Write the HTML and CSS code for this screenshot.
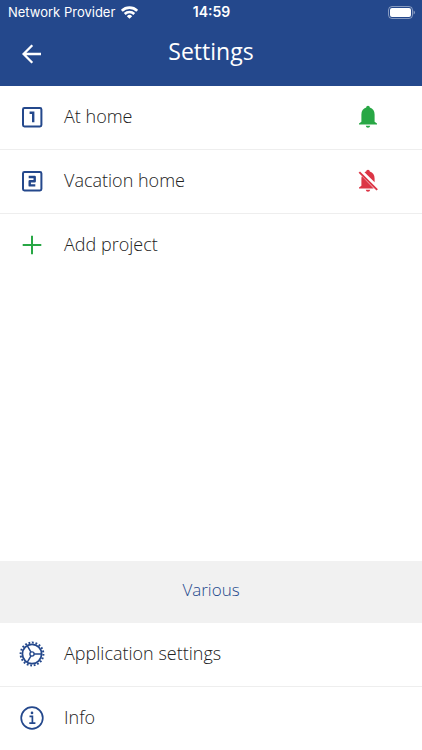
FILE: index.html
```html
<!DOCTYPE html>
<html lang="en">
<head>
<meta charset="utf-8">
<meta name="viewport" content="width=device-width, initial-scale=1">
<title>Settings</title>
<link rel="stylesheet" href="styles.css">
</head>
<body>
<header class="header">
  <div class="status">
    <div class="carrier">
      <span>Network Provider</span>
      <svg width="17" height="13" viewBox="0 0 16 12" fill="none" stroke="#fff" stroke-width="2.4" aria-hidden="true">
        <path d="M.8 4.4a10.2 10.2 0 0 1 14.4 0M3.5 7.4a6.4 6.4 0 0 1 9 0"/>
        <path d="M8 11.8L5.5 9.5a3.5 3.5 0 0 1 5 0z" fill="#fff" stroke="none"/>
      </svg>
    </div>
    <time class="clock">14:59</time>
    <svg class="battery" width="27" height="13" viewBox="0 0 27 13" aria-hidden="true">
      <rect x=".5" y=".5" width="24" height="12" rx="3.5" fill="none" stroke="#fff" stroke-opacity=".45"/>
      <rect x="2" y="2" width="21" height="9" rx="2" fill="#fff"/>
      <path d="M25.6 4.5q1.3.5 1.3 2t-1.3 2z" fill="#fff" fill-opacity=".5"/>
    </svg>
  </div>
  <div class="titlebar">
    <button class="back" aria-label="Back">
      <svg width="24" height="24" viewBox="0 0 24 24" fill="none" stroke="#fff" stroke-width="2.3" aria-hidden="true"><path d="M21 12H4M12.3 3.3L3.6 12l8.700 8.700"/></svg>
    </button>
    <h1 class="title">Settings</h1>
  </div>
</header>
<main class="content">
  <ul class="list">
    <li class="row">
      <a class="link" href="#home">
        <svg class="icon blue" viewBox="0 0 26 26" aria-hidden="true"><rect x="4" y="4" width="18.4" height="18.4" rx="1.4"/><path d="M10.6 8.8h3.6v9.4" stroke-width="2.4"/></svg>
        <span>At home</span>
      </a>
      <button class="bell" aria-label="Notifications on">
        <svg width="24" height="24" viewBox="0 0 24 24" fill="#28a745" aria-hidden="true"><path d="M12 .8c1 0 1.7.7 1.8 1.7 3.1.9 4.8 3.6 4.8 7v7.2L21 18.4v1.2H3v-1.2l2.400-1.700V9.500c0-3.400 1.700-6.100 4.800-7C10.300 1.500 11 .8 12 .8zM9.800 20.800h4.400c-.2 1.300-1 2-2.200 2s-2-.7-2.200-2z"/></svg>
      </button>
    </li>
    <li class="row">
      <a class="link" href="#vacation">
        <svg class="icon blue" viewBox="0 0 26 26" aria-hidden="true"><rect x="4" y="4" width="18.4" height="18.4" rx="1.4"/><path d="M9.7 9h6v4.200h-5v4.200h5.600" stroke-width="2.4" stroke-linejoin="round"/></svg>
        <span>Vacation home</span>
      </a>
      <button class="bell" aria-label="Notifications off">
        <svg width="24" height="24" viewBox="0 0 24 24" fill="#dc3545" aria-hidden="true"><path d="M8.500 3.200q.8-.5 1.700-.7C10.300 1.500 11 .8 12 .8s1.700.7 1.800 1.700c3.100.9 4.800 3.600 4.800 7v3.700zM5.900 7.200L17.700 19.600H3v-1.200l2.400-1.700V9.500q0-1.300.5-2.300zM9.800 20.800h4.400c-.2 1.300-1 2-2.200 2s-2-.7-2.200-2z"/><path d="M3.300 3.100L21.200 20.900" stroke="#dc3545" stroke-width="2"/></svg>
      </button>
    </li>
    <li class="row">
      <a class="link" href="#add">
        <svg class="icon green" viewBox="0 0 26 26" aria-hidden="true"><path d="M13 3.700v18.600M3.700 13h18.600"/></svg>
        <span>Add project</span>
      </a>
    </li>
  </ul>
  <section class="various">
    <h2 class="section">Various</h2>
    <ul class="list">
      <li class="row">
        <a class="link" href="#application">
          <svg class="icon blue" viewBox="0 0 26 26" aria-hidden="true"><circle cx="13" cy="13" r="9.6" stroke-width="1.8"/><circle cx="13" cy="13" r="11.4" stroke-width="2" pathLength="80" stroke-dasharray="2 2"/><circle cx="13" cy="13" r="2.1" stroke-width="1.4"/><path d="M15.100 13h7.500M12 11.200L8.200 4.700M12 14.800l-3.800 6.500" stroke-width="1.5"/></svg>
          <span>Application settings</span>
        </a>
      </li>
      <li class="row">
        <a class="link" href="#info">
          <svg class="icon blue" viewBox="0 0 26 26" aria-hidden="true"><circle cx="13" cy="13" r="10.8" stroke-width="1.7"/><path d="M10.500 11.300h2.900v6.800M10.300 18.200h6.100" stroke-width="1.7"/><circle cx="13" cy="7.9" r="1.3" fill="currentColor" stroke="none"/></svg>
          <span>Info</span>
        </a>
      </li>
    </ul>
  </section>
</main>
</body>
</html>
```
FILE: styles.css
```css
* { box-sizing: border-box; }
body {
  margin: 0;
  min-height: 100vh;
  display: flex;
  flex-direction: column;
  background: #fff;
  color: #222;
  font-family: "Open Sans", "Noto Sans", sans-serif;
  font-weight: 300;
}
h1, h2, ul { margin: 0; padding: 0; font-weight: inherit; }
ul { list-style: none; }
svg { display: block; flex: none; }
button { padding: 0; border: 0; background: none; cursor: pointer; }

.header { background: #24488c; color: #fff; }
.status {
  display: grid;
  grid-template-columns: 1fr auto 1fr;
  align-items: center;
  height: 24px;
  padding: 0 7px 0 8px;
  font: 400 13px/16px Inter, sans-serif;
}
.carrier { display: flex; align-items: center; gap: 6px; white-space: nowrap; }
.clock { font-size: 14px; font-weight: 600; }
.battery { justify-self: end; }

.titlebar {
  display: grid;
  grid-template-columns: 24px 1fr 24px;
  align-items: center;
  height: 62px;
  padding: 0 20px 2px;
}
.title {
  padding-bottom: 6px;
  font-size: 23px;
  font-weight: 400;
  line-height: 32px;
  text-align: center;
}

.content { flex: 1; display: flex; flex-direction: column; }
.various { margin-top: auto; }
.row {
  display: flex;
  align-items: center;
  height: 64px;
  padding: 0 42px 2px 0;
  border-bottom: 1px solid #eee;
}
.row:last-child { height: 63px; border-bottom: 0; }
.link {
  flex: 1;
  display: flex;
  align-items: center;
  gap: 19px;
  height: 100%;
  padding-left: 19px;
  color: inherit;
  font-size: 18px;
  line-height: 24px;
  text-decoration: none;
}
.link span { padding-bottom: 2px; }
.icon { width: 26px; height: 26px; fill: none; stroke: currentColor; stroke-width: 2; }
.blue { color: #24488c; }
.green { color: #28a745; }
.section {
  height: 62px;
  padding-bottom: 4px;
  background: #f1f1f1;
  color: #24488c;
  font-size: 17px;
  line-height: 58px;
  text-align: center;
}
```
